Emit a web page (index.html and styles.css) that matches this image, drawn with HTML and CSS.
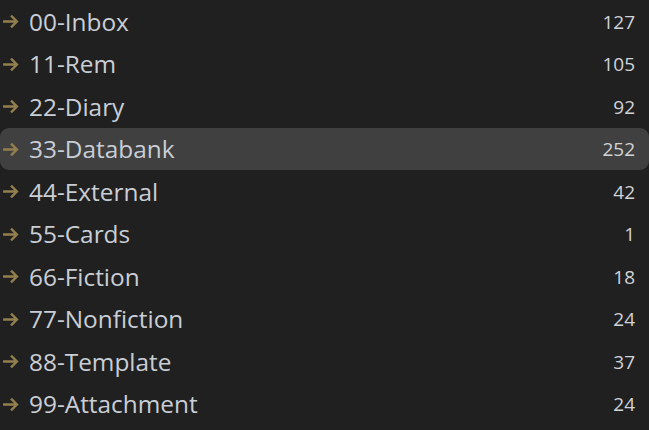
FILE: index.html
```html
<!DOCTYPE html>
<html>
<head>
<meta charset="utf-8">
<link rel="stylesheet" href="styles.css">
</head>
<body>
<ul class="list">
  <li class="row"><svg class="arrow" viewBox="0 0 16 14"><path d="M1 7H14M8.5 1.5L14 7L8.5 12.5"/></svg><span class="name">00-Inbox</span><span class="count">127</span></li>
  <li class="row"><svg class="arrow" viewBox="0 0 16 14"><path d="M1 7H14M8.5 1.5L14 7L8.5 12.5"/></svg><span class="name">11-Rem</span><span class="count">105</span></li>
  <li class="row"><svg class="arrow" viewBox="0 0 16 14"><path d="M1 7H14M8.5 1.5L14 7L8.5 12.5"/></svg><span class="name">22-Diary</span><span class="count">92</span></li>
  <li class="row active"><svg class="arrow" viewBox="0 0 16 14"><path d="M1 7H14M8.5 1.5L14 7L8.5 12.5"/></svg><span class="name">33-Databank</span><span class="count">252</span></li>
  <li class="row"><svg class="arrow" viewBox="0 0 16 14"><path d="M1 7H14M8.5 1.5L14 7L8.5 12.5"/></svg><span class="name">44-External</span><span class="count">42</span></li>
  <li class="row"><svg class="arrow" viewBox="0 0 16 14"><path d="M1 7H14M8.5 1.5L14 7L8.5 12.5"/></svg><span class="name">55-Cards</span><span class="count">1</span></li>
  <li class="row"><svg class="arrow" viewBox="0 0 16 14"><path d="M1 7H14M8.5 1.5L14 7L8.5 12.5"/></svg><span class="name">66-Fiction</span><span class="count">18</span></li>
  <li class="row"><svg class="arrow" viewBox="0 0 16 14"><path d="M1 7H14M8.5 1.5L14 7L8.5 12.5"/></svg><span class="name">77-Nonfiction</span><span class="count">24</span></li>
  <li class="row"><svg class="arrow" viewBox="0 0 16 14"><path d="M1 7H14M8.5 1.5L14 7L8.5 12.5"/></svg><span class="name">88-Template</span><span class="count">37</span></li>
  <li class="row"><svg class="arrow" viewBox="0 0 16 14"><path d="M1 7H14M8.5 1.5L14 7L8.5 12.5"/></svg><span class="name">99-Attachment</span><span class="count">24</span></li>
</ul>
</body>
</html>
```
FILE: styles.css
```css
html, body {
  margin: 0;
  padding: 0;
  background: #202020;
  height: 100%;
  overflow: hidden;
}
.list {
  list-style: none;
  margin: 0;
  padding: 0;
  font-family: "Open Sans", "Noto Sans", sans-serif;
}
.row {
  display: flex;
  align-items: center;
  height: 42.5px;
  border-radius: 9px;
  padding: 0 14px 0 2px;
}
.row.active {
  background: #404040;
}
.arrow {
  width: 17px;
  height: 15px;
  margin-right: 10px;
  margin-top: 1px;
  fill: none;
  stroke: #927f4e;
  stroke-width: 2.3;
  flex: none;
}
.name {
  flex: 1;
  color: #c9ced6;
  font-size: 24.4px;
  line-height: 1;
  padding-top: 1px;
}
.count {
  color: #d0d3d8;
  font-size: 19px;
  line-height: 1;
  padding-top: 2px;
}
```
